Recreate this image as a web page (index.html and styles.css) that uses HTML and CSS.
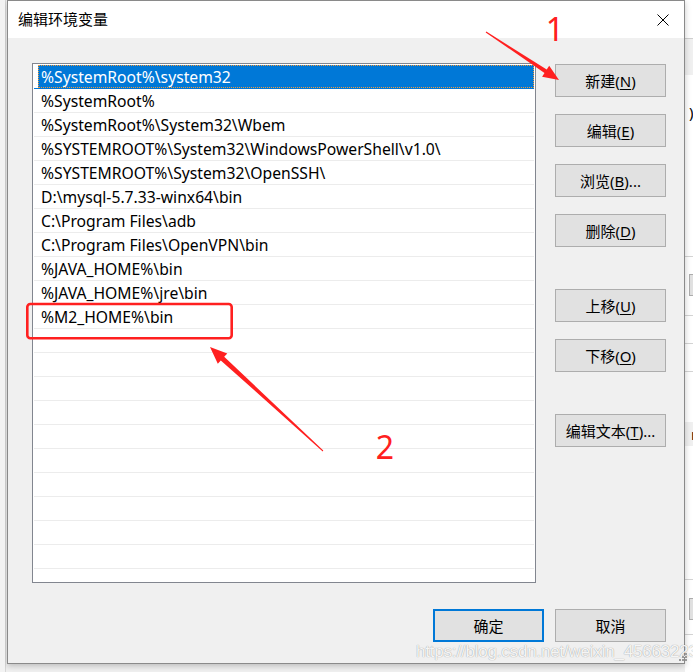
FILE: index.html
```html
<!DOCTYPE html>
<html lang="zh-CN">
<head>
<meta charset="utf-8">
<title>编辑环境变量</title>
<link rel="stylesheet" href="styles.css">
</head>
<body>
<div class="desk">
  <div class="bgwin">
    <div class="bw-band b1"></div>
    <div class="bw-txt t1">)\</div>
    <div class="bw-line y256"></div>
    <div class="bw-btn k1">册</div>
    <div class="bw-line y315"></div>
    <div class="bw-line y343"></div>
    <div class="bw-line y371"></div>
    <div class="bw-band b2"><span>n</span></div>
    <div class="bw-line y579"></div>
    <div class="bw-btn k2">册</div>
    <div class="bw-line y634"></div>
  </div>

  <div class="dialog">
    <div class="titlebar">
      <span class="title">编辑环境变量</span>
      <svg class="close" width="12" height="12" viewBox="0 0 12 12"><path d="M0.5 0.5L11.5 11.5M11.5 0.5L0.5 11.5" stroke="#000" stroke-width="1" fill="none"/></svg>
    </div>
    <div class="content">
      <div class="main">
        <div class="list">
          <div class="row sel"><span class="t">%SystemRoot%\system32</span></div>
          <div class="row"><span class="t">%SystemRoot%</span></div>
          <div class="row"><span class="t">%SystemRoot%\System32\Wbem</span></div>
          <div class="row"><span class="t">%SYSTEMROOT%\System32\WindowsPowerShell\v1.0\</span></div>
          <div class="row"><span class="t">%SYSTEMROOT%\System32\OpenSSH\</span></div>
          <div class="row"><span class="t">D:\mysql-5.7.33-winx64\bin</span></div>
          <div class="row"><span class="t">C:\Program Files\adb</span></div>
          <div class="row"><span class="t">C:\Program Files\OpenVPN\bin</span></div>
          <div class="row"><span class="t">%JAVA_HOME%\bin</span></div>
          <div class="row"><span class="t">%JAVA_HOME%\jre\bin</span></div>
          <div class="row"><span class="t">%M2_HOME%\bin</span></div>
          <div class="row"></div>
          <div class="row"></div>
          <div class="row"></div>
          <div class="row"></div>
          <div class="row"></div>
          <div class="row"></div>
          <div class="row"></div>
          <div class="row"></div>
          <div class="row"></div>
          <div class="row"></div>
          <div class="row"></div>
        </div>
        <div class="side">
          <button class="btn">新建(<u>N</u>)</button>
          <button class="btn">编辑(<u>E</u>)</button>
          <button class="btn">浏览(<u>B</u>)...</button>
          <button class="btn">删除(<u>D</u>)</button>
          <button class="btn gap">上移(<u>U</u>)</button>
          <button class="btn">下移(<u>O</u>)</button>
          <button class="btn gap">编辑文本(<u>T</u>)...</button>
        </div>
      </div>
      <div class="footer">
        <button class="btn ok">确定</button>
        <button class="btn">取消</button>
      </div>
    </div>
  </div>

  <div class="watermark">https://blog.csdn.net/weixin_45663223</div>
  <svg class="grip" width="10" height="10" viewBox="0 0 10 10">
    <rect x="7" y="1" width="2" height="2"/><rect x="4" y="4" width="2" height="2"/><rect x="7" y="4" width="2" height="2"/>
    <rect x="1" y="7" width="2" height="2"/><rect x="4" y="7" width="2" height="2"/><rect x="7" y="7" width="2" height="2"/>
  </svg>

  <svg class="annot" width="693" height="672" viewBox="0 0 693 672">
    <polygon fill="#ff2020" points="485.7,32.4 544.5,72.9 542.1,76.7 559,80 549.2,65.8 546.7,69.6 486.3,31.6"/>
    <polygon fill="#ff2020" points="323.3,450.6 224.2,356.7 227.3,353.4 210,347 217.8,363.7 220.8,360.4 322.7,451.4"/>
    <rect x="27.3" y="304" width="204.4" height="34.3" rx="3" fill="none" stroke="#ff2020" stroke-width="2.6"/>
    <text class="num" x="555" y="41" text-anchor="middle">1</text>
    <text class="num" x="385" y="459" text-anchor="middle">2</text>
  </svg>
</div>
</body>
</html>
```

FILE: styles.css
```css
* { box-sizing: border-box; }
html, body { margin: 0; padding: 0; }
body {
  width: 693px;
  height: 672px;
  overflow: hidden;
  background: #f0f0f0;
  font-family: "Noto Sans", "Noto Sans CJK SC", sans-serif;
  color: #000;
}
.desk {
  position: relative;
  width: 693px;
  height: 672px;
  overflow: hidden;
  background: #f0f0f0;
  border-left: 5px solid #f3f3f3;
}
.desk::before {
  content: "";
  position: absolute;
  left: 0;
  top: 0;
  width: 1px;
  height: 672px;
  background: #d8d8d8;
}

/* background window peeking out on the right */
.bgwin {
  position: absolute;
  left: 680px;
  top: 0;
  width: 20px;
  height: 672px;
  background: #fff;
  overflow: hidden;
}
.bw-band { position: absolute; left: 0; width: 20px; background: #f0f0f0; }
.b1 { top: 38px; height: 37px; border-top: 1px solid #d0d0d0; }
.b2 { top: 422px; height: 24px; font: 15px "Noto Sans", sans-serif; line-height: 24px; padding-left: 6px; }
.bw-line { position: absolute; left: 0; width: 20px; height: 1px; background: #d4d4d4; }
.y256 { top: 256px; }
.y315 { top: 315px; }
.y343 { top: 343px; }
.y371 { top: 371px; }
.y579 { top: 579px; }
.y634 { top: 634px; }
.bw-txt { position: absolute; top: 102px; left: 4px; font: 15px "Noto Sans", sans-serif; }
.bw-btn {
  position: absolute;
  left: 4px;
  width: 30px;
  height: 22px;
  background: #e1e1e1;
  border: 1px solid #adadad;
  font: 14px "Noto Sans CJK SC", sans-serif;
  line-height: 20px;
  padding-left: 3px;
}
.k1 { top: 274px; }
.k2 { top: 598px; }

/* dialog */
.dialog {
  position: absolute;
  left: 2px;
  top: 0;
  width: 678px;
  height: 664px;
  border: 1px solid #8a8a8a;
  background: #f0f0f0;
  box-shadow: 0 2px 6px rgba(0, 0, 0, 0.22);
  display: flex;
  flex-direction: column;
}
.titlebar {
  height: 37px;
  background: #fff;
  display: flex;
  align-items: center;
  justify-content: space-between;
  padding: 0 15px 1px 10px;
  flex: none;
}
.title {
  font: 15px "Noto Sans CJK SC", sans-serif;
  line-height: 20px;
}
.close { display: block; margin-top: 1px; }

.content {
  flex: 1;
  display: flex;
  flex-direction: column;
  padding: 25px 18px 0 24px;
}
.main {
  display: flex;
  align-items: flex-start;
}
.list {
  width: 504px;
  height: 520px;
  border: 1px solid #82868f;
  background: #fff;
  padding: 1px 1px 0 1px;
  overflow: hidden;
  flex: none;
}
.row {
  height: 24px;
  border-bottom: 1px solid #ececec;
  padding-left: 4px;
  width: 500px;
  display: flex;
}
.row .t {
  flex: 1;
  padding-left: 3px;
  font-size: 15.7px;
  line-height: 24px;
  white-space: nowrap;
}
.row.sel { border-bottom-color: #0078d7; }
.row.sel .t {
  background: #0078d7;
  color: #fff;
  outline: 1px dotted #f39a3a;
  outline-offset: -1px;
}

.side {
  margin-left: 19px;
  margin-top: 1px;
  display: flex;
  flex-direction: column;
  gap: 17px;
}
.btn {
  width: 111px;
  height: 33px;
  background: #e1e1e1;
  border: 1px solid #adadad;
  border-radius: 0;
  font-family: "Noto Sans", "Noto Sans CJK SC", sans-serif;
  font-size: 15px;
  color: #000;
  padding: 0;
  margin: 0;
  line-height: 20px;
}
.btn u { text-underline-offset: 2px; text-decoration-thickness: 1px; }
.side .gap { margin-top: 25px; }

.footer {
  display: flex;
  justify-content: flex-end;
  gap: 11px;
  margin-top: 26px;
  padding-right: 0;
}
.btn.ok {
  width: 111px;
  border: 2px solid #0078d7;
}

.watermark {
  position: absolute;
  left: 411px;
  top: 642px;
  font: 17px "Liberation Sans", sans-serif;
  color: rgba(255, 255, 255, 0.92);
  text-shadow: 0 0 1px rgba(0, 0, 0, 0.28), 0 0 1px rgba(0, 0, 0, 0.2);
  letter-spacing: -0.2px;
  white-space: nowrap;
}
.grip {
  position: absolute;
  left: 673px;
  top: 652px;
  fill: #9a9a9a;
}

.annot {
  position: absolute;
  left: -5px;
  top: 0;
  pointer-events: none;
}
.num {
  font-family: "Noto Sans", sans-serif;
  font-size: 32px;
  fill: #ff2020;
}
```
